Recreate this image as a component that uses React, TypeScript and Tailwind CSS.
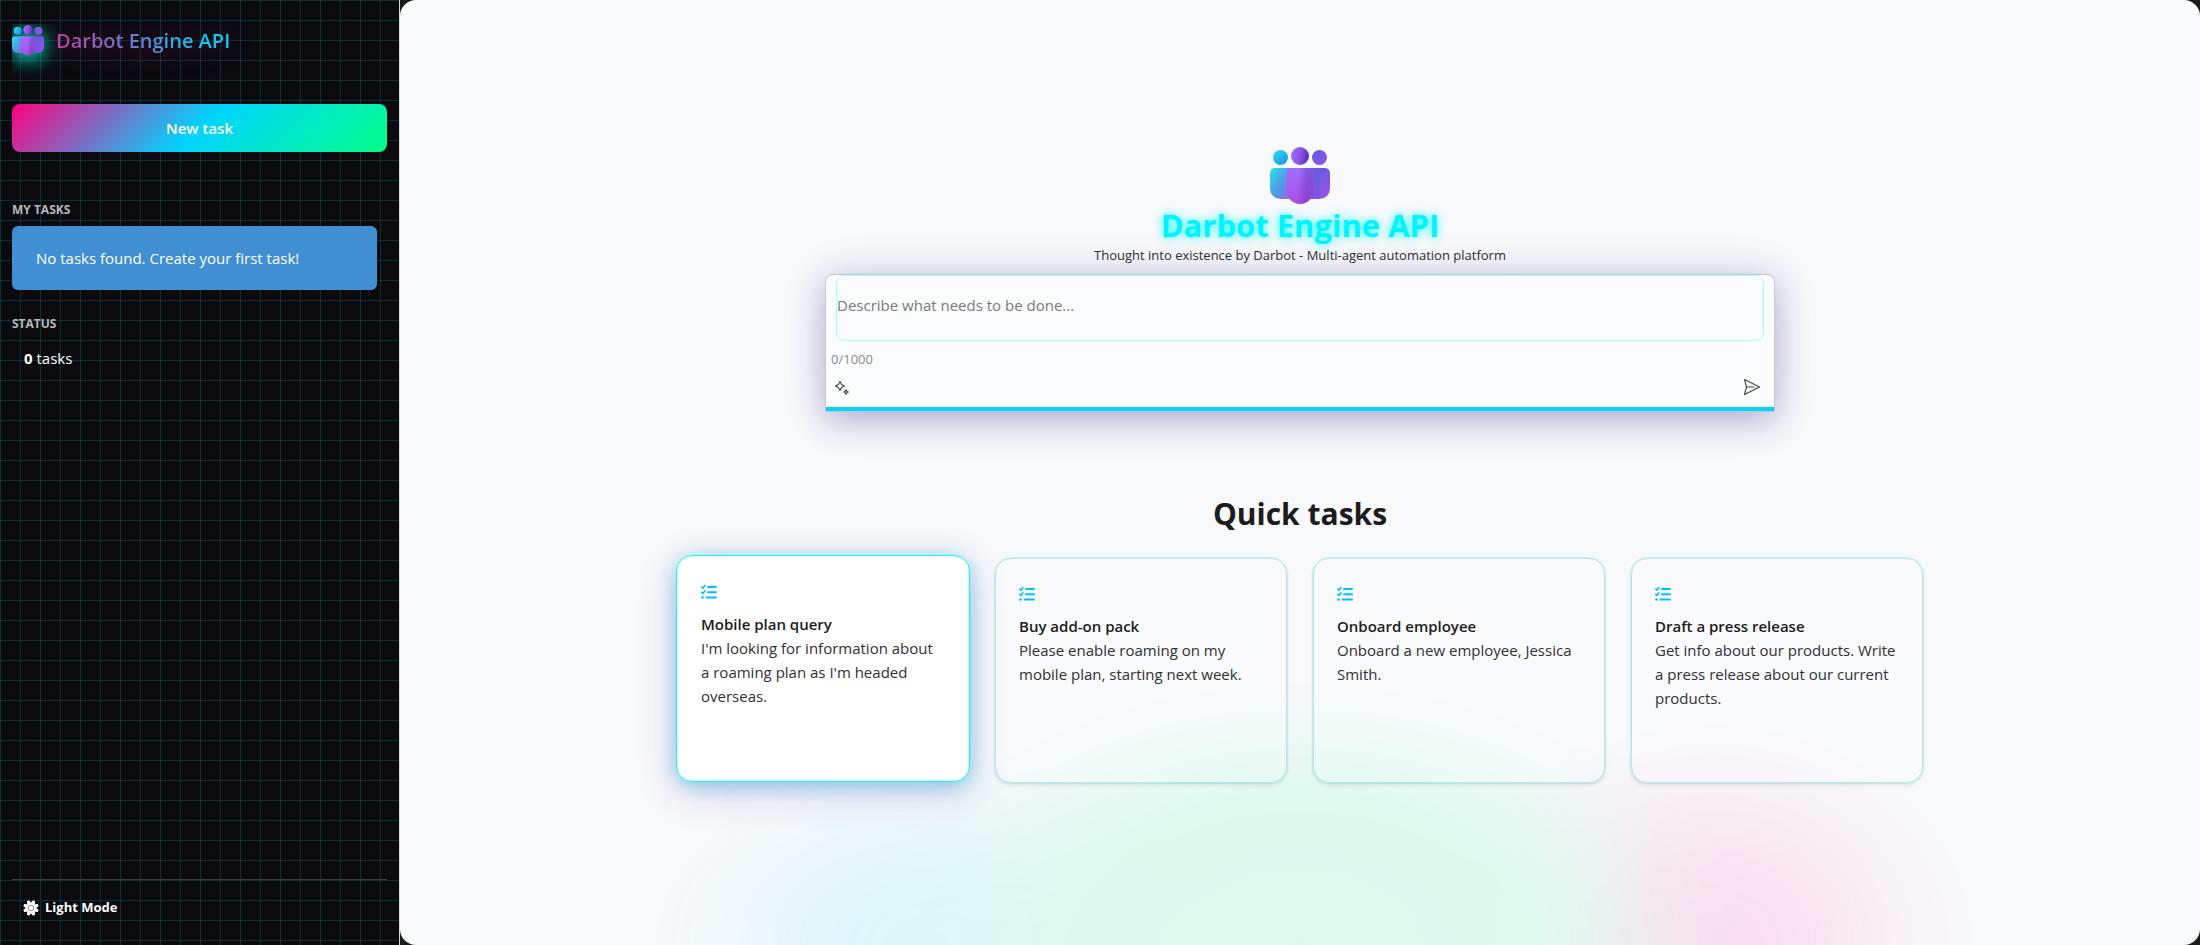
import React, { useId, useState } from "react";

const quickTasks = [
  { title: "Mobile plan query", text: "I'm looking for information about a roaming plan as I'm headed overseas.", active: true },
  { title: "Buy add-on pack", text: "Please enable roaming on my mobile plan, starting next week.", active: false },
  { title: "Onboard employee", text: "Onboard a new employee, Jessica Smith.", active: false },
  { title: "Draft a press release", text: "Get info about our products. Write a press release about our current products.", active: false },
];

function TeamLogo({ className }: { className: string }) {
  const id = useId();
  const u = (n: string) => `url(#${id}${n})`;
  return (
    <svg viewBox="0 0 60 60" className={className} aria-hidden="true">
      <defs>
        <linearGradient id={`${id}a`} x1="0" y1="0" x2="1" y2="1">
          <stop offset="0" stopColor="#2fdcee" />
          <stop offset="1" stopColor="#1b8ee0" />
        </linearGradient>
        <linearGradient id={`${id}b`} x1="0" y1="0" x2="1" y2="1">
          <stop offset="0" stopColor="#2be3ee" />
          <stop offset=".5" stopColor="#4c9fe6" />
          <stop offset="1" stopColor="#9b62e0" />
        </linearGradient>
        <linearGradient id={`${id}c`} x1="0" y1="0" x2="1" y2="1">
          <stop offset=".3" stopColor="#6a5be0" />
          <stop offset="1" stopColor="#a04fe8" />
        </linearGradient>
        <linearGradient id={`${id}d`} x1="0" y1=".4" x2="1" y2=".6">
          <stop offset="0" stopColor="#a36dfb" />
          <stop offset=".5" stopColor="#8b55e4" />
          <stop offset="1" stopColor="#5a29b0" />
        </linearGradient>
        <linearGradient id={`${id}e`} x1="0" y1="0" x2="0" y2="1">
          <stop offset="0" stopColor="#9f70fb" />
          <stop offset="1" stopColor="#ad4ee6" />
        </linearGradient>
        <linearGradient id={`${id}f`} x1="0" y1="0" x2="1" y2=".1">
          <stop offset=".45" stopColor="#5b2cab" stopOpacity="0" />
          <stop offset=".8" stopColor="#5b2cab" stopOpacity=".4" />
          <stop offset="1" stopColor="#5b2cab" stopOpacity=".4" />
        </linearGradient>
      </defs>
      <circle cx="10.500" cy="12.500" r="7.500" fill={u("a")} />
      <circle cx="49.500" cy="12.500" r="7.500" fill={u("c")} />
      <circle cx="30" cy="11" r="9" fill={u("d")} />
      <path d="M5 23h16v31H10.500A10.500 10.500 0 0 1 0 43.500V28a5 5 0 0 1 5-5z" fill={u("b")} />
      <path d="M40 23h15a5 5 0 0 1 5 5v15.500A10.500 10.500 0 0 1 49.500 54H40z" fill={u("c")} />
      <path d="M21.500 23h17a5 5 0 0 1 5 5v17.500a13.500 13.500 0 0 1-27 0V28a5 5 0 0 1 5-5z" fill={u("e")} />
      <path d="M21.500 23h17a5 5 0 0 1 5 5v17.500a13.500 13.500 0 0 1-27 0V28a5 5 0 0 1 5-5z" fill={u("f")} />
    </svg>
  );
}

function ChecklistIcon() {
  return (
    <svg viewBox="0 0 16 16" className="size-4 fill-none stroke-[#00c0ff]" strokeLinecap="round" strokeLinejoin="round" aria-hidden="true">
      <path d="M.8 3l1.100 1.200L4 1.500M.8 8.300l1.100 1.200L4 6.800" strokeWidth="1.500" />
      <path d="M7 3h8M7 8.200h8M5.500 13.500H15" strokeWidth="2" />
      <circle cx="1.500" cy="13.500" r="1.300" className="fill-[#00c0ff] stroke-none" />
    </svg>
  );
}

function SparkleIcon() {
  return (
    <svg viewBox="0 0 16 16" className="size-4 fill-none stroke-[#424242]" strokeLinejoin="round" aria-hidden="true">
      <path d="M6 1.500L7.600 4.400 10.500 6 7.600 7.600 6 10.500 4.400 7.600 1.500 6l2.900-1.600z" strokeWidth="1.100" />
      <path d="M12 9.700l.8 1.500 1.500.8-1.500.8-.8 1.500-.8-1.500-1.500-.8 1.500-.8z" strokeWidth="1.200" />
    </svg>
  );
}

function SendIcon() {
  return (
    <svg viewBox="0 0 20 20" className="size-5 fill-none stroke-[#424242]" strokeLinejoin="round" strokeLinecap="round" aria-hidden="true">
      <path d="M2.500 2.500L17.500 10l-15 7.500L4.500 10z" strokeWidth="1.100" />
      <path d="M4.500 10H12" strokeWidth="1.100" />
    </svg>
  );
}

function GearIcon() {
  return (
    <svg viewBox="0 0 16 16" className="size-4" aria-hidden="true">
      {[0, 45, 90, 135].map((a) => (
        <path key={a} d="M6.800.2h2.400l1 3.200H5.800zM6.800 15.800h2.400l1-3.200H5.800z" fill="#fff" transform={`rotate(${a + 22.5} 8 8)`} />
      ))}
      <circle cx="8" cy="8" r="5" fill="#fff" />
      <circle cx="8" cy="8" r="2.800" fill="#fff" stroke="#777" strokeWidth="0.800" />
    </svg>
  );
}

export default function App() {
  const [task, setTask] = useState("");
  return (
    <div className="flex min-h-screen bg-[#1b1b1f] font-['Segoe_UI','Open_Sans',sans-serif] text-[#1c1c20]">
      <aside className="flex w-[400px] shrink-0 flex-col border-r border-[#d8d8e0] bg-[#0a0a0f] bg-[linear-gradient(rgba(0,255,255,0.15)_1px,transparent_1px),linear-gradient(90deg,rgba(0,255,255,0.15)_1px,transparent_1px)] bg-[size:20px_20px] px-3 text-white">
        <header className="mt-6 flex h-[52px] items-start gap-3 overflow-hidden">
          <TeamLogo className="size-8 shrink-0 drop-shadow-[0_4px_10px_#00ffe0]" />
          <h2 className="bg-[linear-gradient(100deg,#c03c9c_0%,#9060b8_25%,#5c86d0_50%,#12c4ee_80%,#00d4ff_100%)] bg-clip-text text-xl leading-[34px] font-semibold text-transparent drop-shadow-[0_4px_12px_rgba(255,0,128,0.35)]">
            Darbot Engine API
          </h2>
        </header>
        <button className="mt-7 h-12 rounded-lg bg-[linear-gradient(135deg,#ff0080_0%,#00d4ff_50%,#00ff88_100%)] text-[15px] font-semibold">
          New task
        </button>
        <h3 className="mt-12 text-xs leading-5 font-bold text-[#b8b8ba]">MY TASKS</h3>
        <p className="mt-[6px] mr-[10px] rounded-md bg-[#3f8fd2] px-6 py-5 text-[15px] leading-6">
          No tasks found. Create your first task!
        </p>
        <h3 className="mt-6 text-xs leading-5 font-bold text-[#b8b8ba]">STATUS</h3>
        <p className="mt-3 px-3 text-[15px] leading-6">
          <strong>0</strong> tasks
        </p>
        <footer className="mt-auto border-t border-[#3c3a42] pb-[21px]">
          <button className="mt-3 flex h-8 items-center gap-[6px] px-[11px] text-[13px] font-bold">
            <GearIcon />
            Light Mode
          </button>
        </footer>
      </aside>

      <main className="relative isolate flex min-w-0 flex-1 flex-col items-center overflow-hidden rounded-2xl bg-[#f8f9fb] pt-[145px]">
        <div
          aria-hidden="true"
          className="absolute inset-0 -z-10 bg-[radial-gradient(ellipse_450px_280px_at_50%_100%,rgb(0,255,136)_0%,rgba(0,255,136,0.96)_50%,rgba(0,255,136,0.55)_68%,rgba(0,255,136,0.15)_85%,transparent_100%),radial-gradient(ellipse_290px_200px_at_29%_100%,rgb(0,212,255)_0%,rgba(0,212,255,0.8)_35%,rgba(0,212,255,0.25)_70%,transparent_100%),radial-gradient(ellipse_270px_230px_at_73%_100%,rgb(255,0,128)_0%,rgba(255,0,128,0.8)_35%,rgba(255,0,128,0.25)_70%,transparent_100%)] opacity-[0.105]"
        />
        <TeamLogo className="size-15" />
        <h1 className="text-[31px] leading-10 font-bold text-[#00f4ff] [text-shadow:0_0_10px_#00ffff]">
          Darbot Engine API
        </h1>
        <p className="text-[13px] leading-5 text-[#303034]">
          Thought into existence by Darbot - Multi-agent automation platform
        </p>
        <form
          className="mt-[9px] w-[950px] max-w-full rounded-t-lg border border-[#c8c8cc] bg-[#fafbfd] shadow-[0_8px_32px_rgba(40,40,140,0.300),0_4px_50px_rgba(40,40,120,0.100)]"
          onSubmit={(e) => e.preventDefault()}
        >
          <textarea
            aria-label="Task description"
            value={task}
            maxLength={1000}
            onChange={(e) => setTask(e.target.value)}
            placeholder="Describe what needs to be done..."
            className="mx-[10px] block h-[66px] w-[928px] max-w-full resize-none rounded-lg border border-[#a8fdfb] pt-[17px] text-[15px] leading-6 outline-none placeholder:text-[#7a7a7c]"
          />
          <p className="mt-2 px-[5px] text-[13px] leading-5 text-[#8b8b8d]">{task.length}/1000</p>
          <div className="mt-1 flex h-[34px] items-start justify-between pr-3 pl-2">
            <button type="button" aria-label="Suggestions" className="pt-[7px]">
              <SparkleIcon />
            </button>
            <button type="submit" aria-label="Send" className="pt-1">
              <SendIcon />
            </button>
          </div>
          <div className="h-1 bg-[#00d4ff]" />
        </form>

        <h2 className="mt-[82px] text-3xl leading-10 font-bold">Quick tasks</h2>
        <div className="mt-6 grid w-[1246px] max-w-full grid-cols-4 items-start gap-[26px]">
          {quickTasks.map((q) => (
            <button
              key={q.title}
              className={
                q.active
                  ? "-mx-px -mt-[3px] flex h-[227px] flex-col items-start rounded-2xl border border-[#00ffff] bg-white px-6 pt-7 text-left shadow-[0_4px_20px_rgba(0,160,220,0.4),0_10px_40px_rgba(80,50,160,0.2)]"
                  : "flex h-[225px] flex-col items-start rounded-2xl border border-[#cfdce2] bg-white/10 px-[23px] pt-[27px] text-left shadow-[0_0_0_1px_rgba(0,255,240,0.2),0_2px_4px_rgba(0,0,0,0.1)]"
              }
            >
              <ChecklistIcon />
              <span className="mt-3 text-[15px] leading-6 font-semibold">{q.title}</span>
              <span className="text-[15px] leading-6 text-[#303034]">{q.text}</span>
            </button>
          ))}
        </div>
      </main>
    </div>
  );
}
